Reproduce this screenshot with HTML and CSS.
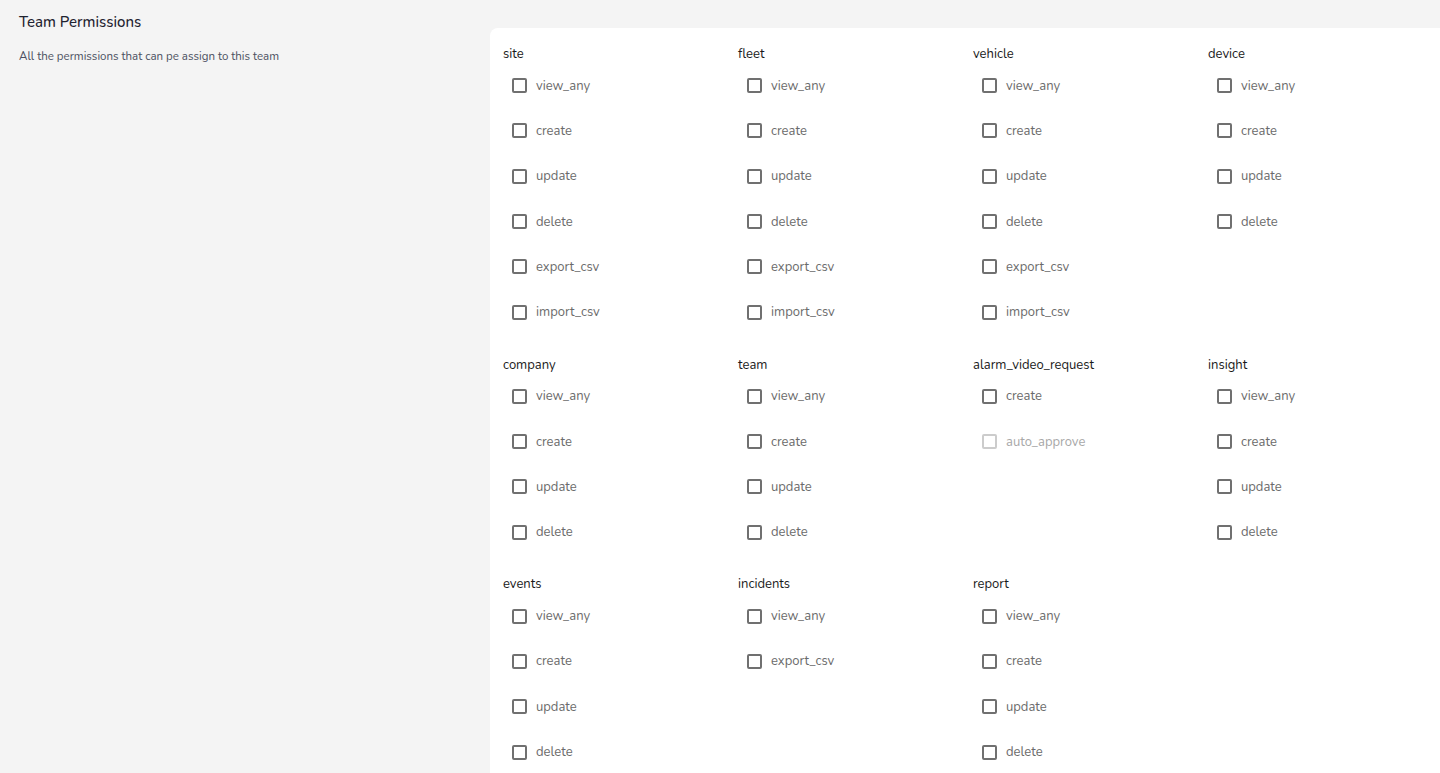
FILE: index.html
```html
<!DOCTYPE html>
<html>
<head>
<meta charset="utf-8">
<link rel="stylesheet" href="styles.css">
</head>
<body>
<div class="page">
  <aside class="intro">
    <h1 class="title">Team Permissions</h1>
    <p class="subtitle">All the permissions that can pe assign to this team</p>
  </aside>
  <section class="card">
    <div class="group">
      <div class="group-name">site</div>
      <label class="perm"><span class="box"></span>view_any</label>
      <label class="perm"><span class="box"></span>create</label>
      <label class="perm"><span class="box"></span>update</label>
      <label class="perm"><span class="box"></span>delete</label>
      <label class="perm"><span class="box"></span>export_csv</label>
      <label class="perm"><span class="box"></span>import_csv</label>
    </div>
    <div class="group">
      <div class="group-name">fleet</div>
      <label class="perm"><span class="box"></span>view_any</label>
      <label class="perm"><span class="box"></span>create</label>
      <label class="perm"><span class="box"></span>update</label>
      <label class="perm"><span class="box"></span>delete</label>
      <label class="perm"><span class="box"></span>export_csv</label>
      <label class="perm"><span class="box"></span>import_csv</label>
    </div>
    <div class="group">
      <div class="group-name">vehicle</div>
      <label class="perm"><span class="box"></span>view_any</label>
      <label class="perm"><span class="box"></span>create</label>
      <label class="perm"><span class="box"></span>update</label>
      <label class="perm"><span class="box"></span>delete</label>
      <label class="perm"><span class="box"></span>export_csv</label>
      <label class="perm"><span class="box"></span>import_csv</label>
    </div>
    <div class="group">
      <div class="group-name">device</div>
      <label class="perm"><span class="box"></span>view_any</label>
      <label class="perm"><span class="box"></span>create</label>
      <label class="perm"><span class="box"></span>update</label>
      <label class="perm"><span class="box"></span>delete</label>
    </div>

    <div class="group">
      <div class="group-name">company</div>
      <label class="perm"><span class="box"></span>view_any</label>
      <label class="perm"><span class="box"></span>create</label>
      <label class="perm"><span class="box"></span>update</label>
      <label class="perm"><span class="box"></span>delete</label>
    </div>
    <div class="group">
      <div class="group-name">team</div>
      <label class="perm"><span class="box"></span>view_any</label>
      <label class="perm"><span class="box"></span>create</label>
      <label class="perm"><span class="box"></span>update</label>
      <label class="perm"><span class="box"></span>delete</label>
    </div>
    <div class="group">
      <div class="group-name">alarm_video_request</div>
      <label class="perm"><span class="box"></span>create</label>
      <label class="perm disabled"><span class="box"></span>auto_approve</label>
    </div>
    <div class="group">
      <div class="group-name">insight</div>
      <label class="perm"><span class="box"></span>view_any</label>
      <label class="perm"><span class="box"></span>create</label>
      <label class="perm"><span class="box"></span>update</label>
      <label class="perm"><span class="box"></span>delete</label>
    </div>

    <div class="group">
      <div class="group-name">events</div>
      <label class="perm"><span class="box"></span>view_any</label>
      <label class="perm"><span class="box"></span>create</label>
      <label class="perm"><span class="box"></span>update</label>
      <label class="perm"><span class="box"></span>delete</label>
    </div>
    <div class="group">
      <div class="group-name">incidents</div>
      <label class="perm"><span class="box"></span>view_any</label>
      <label class="perm"><span class="box"></span>export_csv</label>
    </div>
    <div class="group">
      <div class="group-name">report</div>
      <label class="perm"><span class="box"></span>view_any</label>
      <label class="perm"><span class="box"></span>create</label>
      <label class="perm"><span class="box"></span>update</label>
      <label class="perm"><span class="box"></span>delete</label>
    </div>
  </section>
</div>
</body>
</html>
```
FILE: styles.css
```css
html, body {
  margin: 0;
  padding: 0;
  background: #f4f4f4;
  font-family: "Nunito", "Lato", "Open Sans", sans-serif;
  height: 100%;
  overflow: hidden;
}

.page {
  display: flex;
  align-items: flex-start;
}

.intro {
  width: 490px;
  flex-shrink: 0;
  padding: 12px 0 0 19px;
  box-sizing: border-box;
}

.title {
  margin: 0;
  font-size: 15px;
  font-weight: 500;
  line-height: 20px;
  color: #1f2330;
}

.subtitle {
  margin: 16px 0 0 0;
  font-size: 11.5px;
  line-height: 16px;
  color: #4b5060;
}

.card {
  flex: 1;
  margin: 28px 3px 0 0;
  background: #ffffff;
  border-radius: 8px;
  padding: 16px 12px 40px 13px;
  display: grid;
  grid-template-columns: repeat(4, 235px);
  row-gap: 19.6px;
  align-items: start;
  min-height: 760px;
  box-sizing: border-box;
}

.group {
  display: flex;
  flex-direction: column;
}

.group-name {
  font-size: 13px;
  line-height: 21px;
  margin-bottom: -2px;
  color: #1a1a1a;
}

.perm {
  height: 45.33px;
  display: flex;
  align-items: center;
  padding-left: 9px;
  gap: 9px;
  font-size: 13px;
  color: #6b6b6b;
}

.box {
  width: 11px;
  height: 11px;
  border: 2px solid #707070;
  border-radius: 2px;
  flex-shrink: 0;
}

.perm.disabled {
  color: #a8a8a8;
}

.perm.disabled .box {
  border-color: #cccccc;
}
```
